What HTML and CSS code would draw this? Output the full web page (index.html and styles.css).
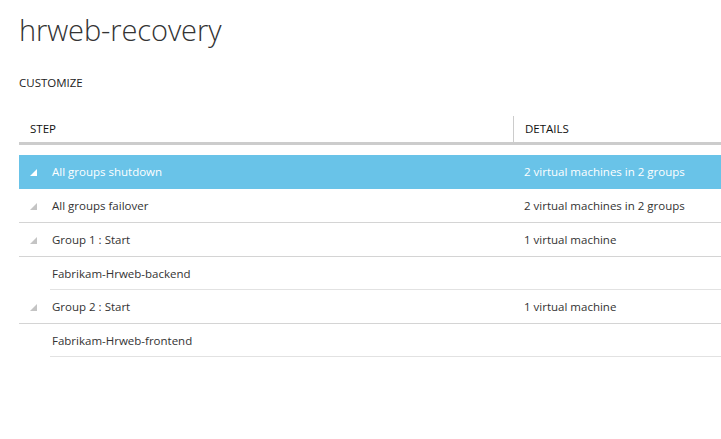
FILE: index.html
```html
<!DOCTYPE html>
<html>
<head>
<meta charset="utf-8">
<link rel="stylesheet" href="styles.css">
</head>
<body>
<div class="page">
  <h1 class="title">hrweb-recovery</h1>
  <div class="subtitle">CUSTOMIZE</div>
  <div class="table">
    <div class="head">
      <div class="hcell step-col">STEP</div>
      <div class="hcell details-col">DETAILS</div>
    </div>
    <div class="rows">
      <div class="row selected">
        <div class="cell step-col"><svg class="tri" viewBox="0 0 7 7"><polygon points="7,0 7,7 0,7"/></svg><span>All groups shutdown</span></div>
        <div class="cell details-col">2 virtual machines in 2 groups</div>
      </div>
      <div class="row">
        <div class="cell step-col"><svg class="tri" viewBox="0 0 7 7"><polygon points="7,0 7,7 0,7"/></svg><span>All groups failover</span></div>
        <div class="cell details-col">2 virtual machines in 2 groups</div>
      </div>
      <div class="row">
        <div class="cell step-col"><svg class="tri" viewBox="0 0 7 7"><polygon points="7,0 7,7 0,7"/></svg><span>Group 1 : Start</span></div>
        <div class="cell details-col">1 virtual machine</div>
      </div>
      <div class="row child">
        <div class="cell step-col"><span>Fabrikam-Hrweb-backend</span></div>
        <div class="cell details-col"></div>
      </div>
      <div class="row">
        <div class="cell step-col"><svg class="tri" viewBox="0 0 7 7"><polygon points="7,0 7,7 0,7"/></svg><span>Group 2 : Start</span></div>
        <div class="cell details-col">1 virtual machine</div>
      </div>
      <div class="row child">
        <div class="cell step-col"><span>Fabrikam-Hrweb-frontend</span></div>
        <div class="cell details-col"></div>
      </div>
    </div>
  </div>
</div>
</body>
</html>
```
FILE: styles.css
```css
html, body {
  margin: 0;
  padding: 0;
  background: #fff;
  overflow: hidden;
}
.page {
  padding-left: 19px;
  font-family: "Open Sans", "Liberation Sans", sans-serif;
  color: #333;
}
.title {
  margin: 0;
  padding-top: 10px;
  font-size: 29px;
  line-height: 40px;
  font-weight: 300;
  color: #333;
  letter-spacing: -0.1px;
}
.subtitle {
  margin-top: 25px;
  font-size: 11.5px;
  line-height: 16px;
  color: #222;
}
.table {
  margin-top: 25px;
}
.head {
  display: grid;
  grid-template-columns: 494px 1fr;
  height: 26px;
  border-bottom: 3px solid #ccc;
}
.hcell {
  font-size: 11.5px;
  font-weight: 400;
  color: #111;
  padding-top: 5px;
}
.head .step-col {
  padding-left: 11px;
}
.head .details-col {
  border-left: 1px solid #ccc;
  padding-left: 11px;
}
.rows {
  margin-top: 10px;
}
.row {
  display: grid;
  grid-template-columns: 494px 1fr;
  height: 33px;
  border-bottom: 1px solid #d4d4d4;
  font-size: 11.5px;
  color: #333;
}
.row.selected {
  background: #69c3e8;
  color: #fff;
  border-bottom-color: #69c3e8;
}
.row.child {
  height: 33px;
  border-bottom: none;
  background: linear-gradient(#e2e2e2, #e2e2e2) no-repeat 31px 100% / 100% 1px;
}
.cell {
  display: flex;
  align-items: center;
}
.step-col {
  padding-left: 11px;
}
.details-col {
  padding-left: 11px;
}
.tri {
  width: 7px;
  height: 7px;
  margin-right: 15px;
  margin-top: 1px;
  fill: #c4c4c4;
}
.selected .tri {
  fill: #fff;
}
.child .step-col span {
  margin-left: 22px;
}
```
